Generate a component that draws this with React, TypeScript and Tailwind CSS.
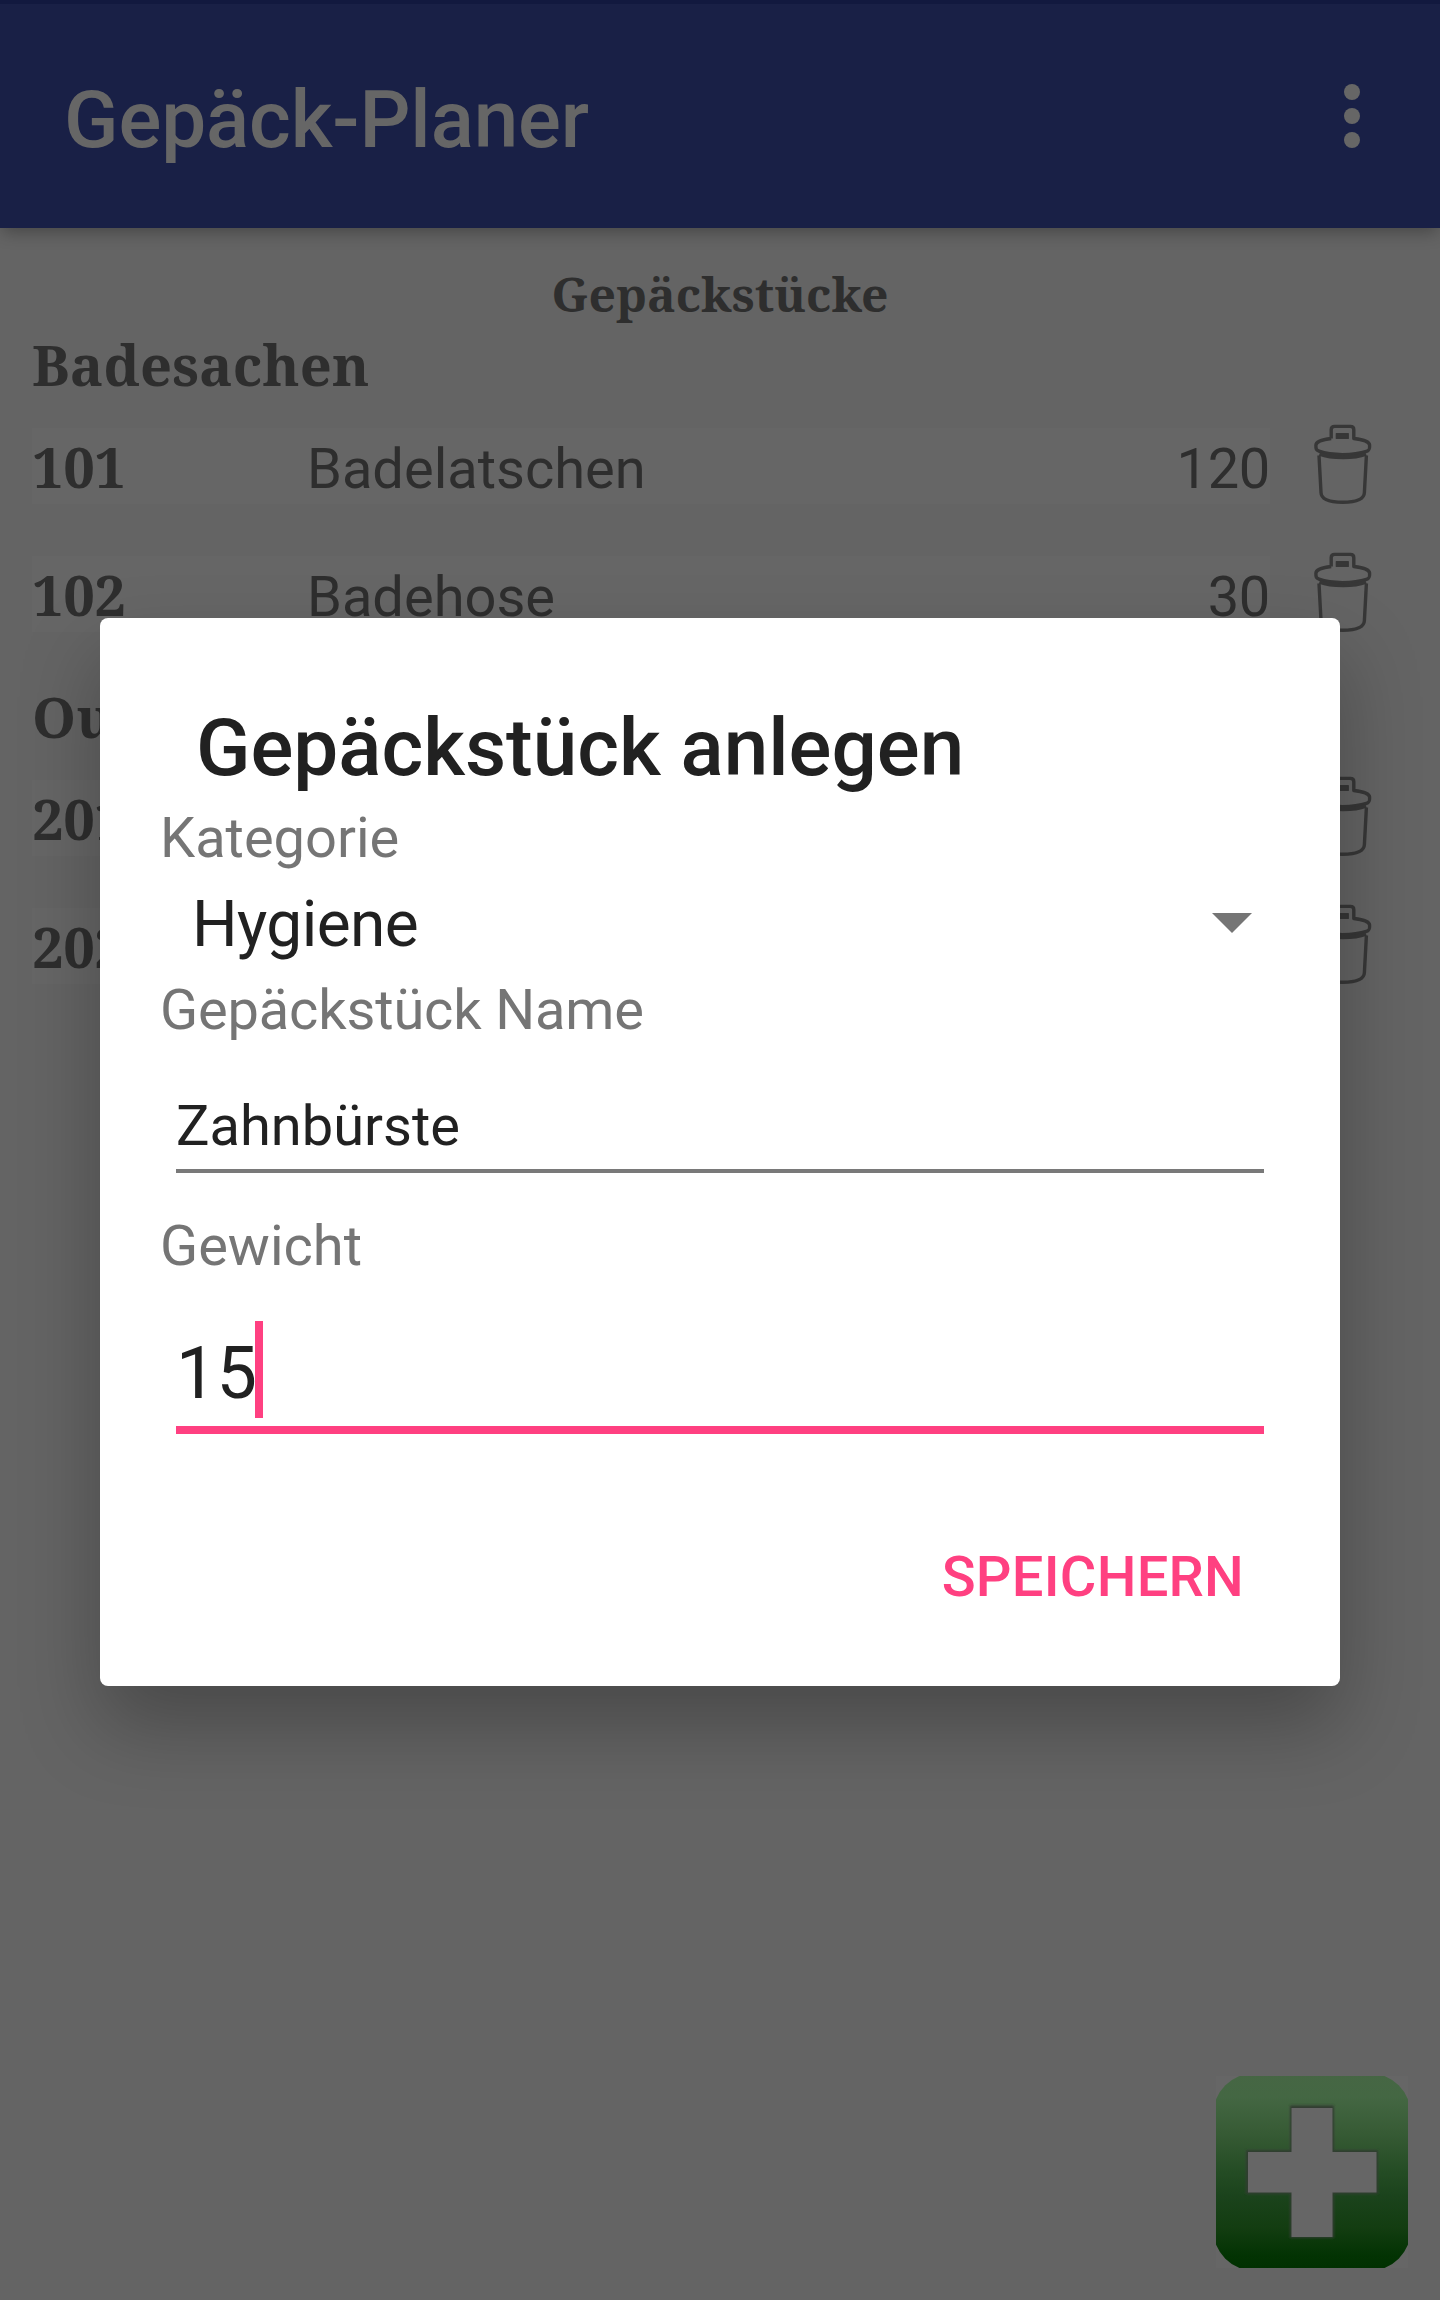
type Item = { id: string; name?: string; weight?: string };
type Category = { title: string; items: Item[] };

const categories: Category[] = [
  {
    title: 'Badesachen',
    items: [
      { id: '101', name: 'Badelatschen', weight: '120' },
      { id: '102', name: 'Badehose', weight: '30' },
    ],
  },
  { title: 'Outdoor', items: [{ id: '201' }, { id: '202' }] },
];

function TrashIcon() {
  return (
    <svg width="60" height="84" viewBox="0 0 60 84" fill="none" stroke="#373737" strokeWidth="3.4" strokeLinejoin="round">
      <path d="M18.2 15.5V6.8Q18.2 3.4 21.5 3.4H37.4Q40.8 3.4 40.8 6.8V15.5C50 16.4 56.6 19 56.6 22.3C56.8 26 56.4 27.4 53.5 28.4C46 30.9 38 31.6 29.7 31.6C21 31.6 13 30.7 6 28.2C3.2 27.2 2.8 26 2.9 22.3C3 19 9 16.4 18.2 15.5" />
      <path d="M6.5 30.8C19 35.4 41 35.4 53 30.8" strokeWidth="4" />
      <path d="M6 32.5L8 69.5C8.2 76.3 17 79.2 29.7 79.2C42.5 79.2 51.2 76.3 51.4 69.5L53.4 32.5" />
      <rect x="23.4" y="10.6" width="11.8" height="4.8" fill="#373737" strokeWidth="1.4" />
    </svg>
  );
}

function AddIcon() {
  return (
    <svg width="192" height="192" viewBox="0 0 192 192">
      <defs>
        <linearGradient id="green" x1="0" y1="0" x2="0" y2="1">
          <stop offset="0" stopColor="#466644" />
          <stop offset="0.12" stopColor="#446743" />
          <stop offset="0.3" stopColor="#375b35" />
          <stop offset="0.5" stopColor="#244c24" />
          <stop offset="0.62" stopColor="#1b431c" />
          <stop offset="0.78" stopColor="#133d11" />
          <stop offset="0.92" stopColor="#033303" />
          <stop offset="1" stopColor="#003000" />
        </linearGradient>
        <filter id="soft" x="-10%" y="-10%" width="120%" height="120%">
          <feGaussianBlur stdDeviation="1.1" />
        </filter>
      </defs>
      <rect x="-3" y="-3" width="198" height="198" rx="42" fill="url(#green)" />
      <path d="M75 30.5H117V75H161V117H117V161H75V117H31V75H75Z" fill="#333d33" stroke="#333d33" strokeWidth="2" filter="url(#soft)" />
      <path d="M75.5 32H116.5V76H160.5V116.5H116.5V161H75.5V116.5H32V76H75.5Z" fill="#666666" />
    </svg>
  );
}

export default function App() {
  return (
    <div className="relative flex h-[2300px] w-[1440px] flex-col overflow-hidden bg-[#646464] font-[Roboto,sans-serif]">
      <header className="relative flex h-[228px] shrink-0 items-center justify-between border-t-4 border-[#12193f] bg-[#192046] pr-[80px] pl-16 shadow-[0_6px_16px_-2px_rgba(0,0,0,0.3)]">
        <h1 className="pt-2 text-[80px] leading-[96px] font-medium tracking-[-0.1px] text-[#666666]">Gepäck-Planer</h1>
        <button className="flex flex-col gap-2" aria-label="Menü">
          <span className="size-4 rounded-full bg-[#666666]" />
          <span className="size-4 rounded-full bg-[#666666]" />
          <span className="size-4 rounded-full bg-[#666666]" />
        </button>
      </header>

      <main className="flex flex-col px-8 pt-[33px] text-[#2e2e2e]">
        <h2 className="text-center font-['Noto_Serif',serif] text-[48px] leading-[66px] font-bold">Gepäckstücke</h2>
        {categories.map((category, index) => (
          <section key={category.title} className={index === 0 ? '-mt-px' : 'mt-5'}>
            <h3 className="font-['Noto_Serif',serif] text-[56px] leading-[76px] font-bold tracking-[0.1px]">{category.title}</h3>
            {category.items.map((item) => (
              <div key={item.id} className="flex h-32 items-center">
                <div className="flex h-[76px] w-[1238px] items-baseline bg-[#666666] text-[56px] leading-[76px]">
                  <span className="w-[275px] font-['Noto_Serif',serif] font-bold tracking-[-0.5px]">{item.id}</span>
                  <span className="flex-1">{item.name}</span>
                  <span className="tracking-[-0.3px]">{item.weight}</span>
                </div>
                <button className="mb-0.5 ml-[43px]" aria-label="Löschen">
                  <TrashIcon />
                </button>
              </div>
            ))}
          </section>
        ))}
      </main>

      <button className="absolute right-8 bottom-8 size-48 bg-[#666666]" aria-label="Hinzufügen">
        <AddIcon />
      </button>

      <div
        role="dialog"
        className="absolute top-[618px] left-[100px] flex h-[1068px] w-[1240px] flex-col rounded-lg bg-white px-[60px] pt-[82px] text-[56px] leading-[76px] text-[#757575] shadow-[0_40px_80px_rgba(0,0,0,0.27)]"
      >
        <h2 className="pl-9 text-[80px] leading-[96px] font-medium text-[#212121]">Gepäckstück anlegen</h2>
        <label className="mt-1">Kategorie</label>
        <div className="mt-1 flex h-[88px] items-center justify-between pr-[28px] pl-8 text-[64px] leading-[88px] text-[#212121]">
          <span className="pt-px tracking-[-0.6px]">Hygiene</span>
          <svg width="40" height="20" viewBox="0 0 40 20" className="-mt-0.5">
            <path d="M0 0H40L20 20Z" fill="#757575" />
          </svg>
        </div>
        <label className="mt-1 tracking-[-0.16px]">Gepäckstück Name</label>
        <div className="mx-4 mt-10 border-b-4 border-[#797979] pb-[5px] text-[#212121]">Zahnbürste</div>
        <label className="mt-[35px]">Gewicht</label>
        <div className="mx-4 mt-[37px] flex border-b-8 border-[#ff4081] pb-2 text-[72px] text-[#212121]">
          <span className="h-[97px] w-[79px] pt-1 leading-[97px]">15</span>
          <span className="h-[97px] w-2 bg-[#ff4081]" />
        </div>
        <button className="mt-[105px] mr-[36px] self-end font-medium tracking-[0.25px] text-[#ff4081]">SPEICHERN</button>
      </div>
    </div>
  );
}
